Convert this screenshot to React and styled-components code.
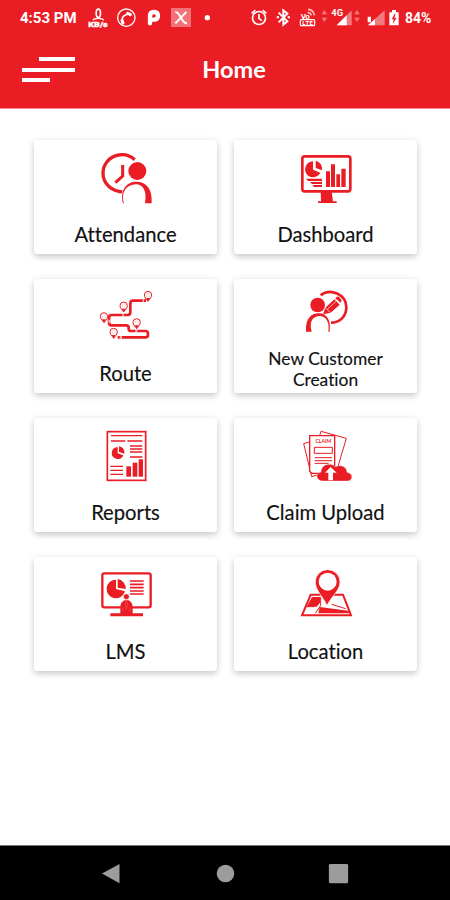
import styled, { createGlobalStyle } from 'styled-components';

const RED = '#ea1c24';

const menus = [
  { label: 'Attendance', icon: AttendanceIcon },
  { label: 'Dashboard', icon: DashboardIcon },
  { label: 'Route', icon: RouteIcon },
  { label: 'New Customer Creation', icon: CustomerIcon, small: true },
  { label: 'Reports', icon: ReportsIcon },
  { label: 'Claim Upload', icon: ClaimIcon },
  { label: 'LMS', icon: LmsIcon },
  { label: 'Location', icon: LocationIcon },
];

function App() {
  return (
    <>
      <GlobalStyle />
      <Screen>
        <Header>
          <StatusBar />
          <TitleBar>
            <MenuButton aria-label="menu">
              <MenuLine $width={36} $right />
              <MenuLine $width={53} />
              <MenuLine $width={28} />
            </MenuButton>
            <Title>Home</Title>
          </TitleBar>
        </Header>
        <MenuGrid>
          {menus.map(({ label, icon: Icon, small }) => (
            <MenuCard key={label}>
              <CardIcon viewBox="0 0 240 195">
                <Icon />
              </CardIcon>
              <CardLabel $small={small}>{label}</CardLabel>
            </MenuCard>
          ))}
        </MenuGrid>
        <NavBar>
          <NavIcon viewBox="0 0 24 24">
            <path d="M0 12 20 1v22z" />
          </NavIcon>
          <NavIcon viewBox="0 0 24 24">
            <circle cx="12" cy="12" r="10" />
          </NavIcon>
          <NavIcon viewBox="0 0 24 24">
            <rect x="1" y="1" width="22" height="22" rx="1.5" />
          </NavIcon>
        </NavBar>
      </Screen>
    </>
  );
}

function StatusBar() {
  return (
    <StatusRow>
      <Clock>4:53 PM</Clock>
      <LeftStatus viewBox="255 0 390 108">
        <ellipse cx="295" cy="40" rx="6.5" ry="12.5" fill="none" stroke="#fff" strokeWidth="5" />
        <path d="M279 61Q281 55 295 55T311 61" fill="none" stroke="#fff" strokeWidth="4" />
        <text
          x="265"
          y="80"
          fontSize="23"
          fontWeight="900"
          textLength="58"
          lengthAdjust="spacingAndGlyphs"
          stroke="#fff"
        >
          KB/s
        </text>
        <circle cx="379" cy="53" r="26" fill="none" stroke="#fff" strokeWidth="4" />
        <path d="M367 69Q362 44 388 42" fill="none" stroke="#fff" strokeWidth="5" />
        <path
          d="M383 40 391 44M366 61 369 69"
          fill="none"
          stroke="#fff"
          strokeWidth="9"
          strokeLinecap="round"
        />
        <path
          d="M450 70V48q0-12 12-12 12 0 12 11.500t-12 11.500h-4"
          fill="none"
          stroke="#fff"
          strokeWidth="13"
          strokeLinecap="round"
          strokeLinejoin="round"
        />
        <rect x="513" y="24" width="60" height="57" fill="#fff" opacity=".38" />
        <path d="M526 36q8 0 17 17t18 17M559 36 526 70" fill="none" stroke="#fff" strokeWidth="6" />
        <circle cx="622" cy="53" r="8" />
      </LeftStatus>
      <RightStatus viewBox="70 0 462 108">
        <g fill="none" stroke="#fff" strokeWidth="5">
          <circle cx="103" cy="54" r="19.5" />
          <path d="M81 40 92 30M125 40 114 30M103 42v13l8 7" />
          <path d="m162 38 26 26-12 10V31l12 10-26 26M156 52h7M189 52h7" strokeWidth="6" />
          <path d="M249 37q9 1 11 9M250 28q17 1 19 18" strokeWidth="5" opacity=".7" />
          <rect x="227" y="59" width="43" height="18" rx="3" strokeWidth="3.5" />
        </g>
        <text x="228" y="56" fontSize="24" fontWeight="700" textLength="27">
          Vo
        </text>
        <text x="233" y="76" fontSize="18" fontWeight="700" textLength="32">
          LTE
        </text>
        <g opacity=".42">
          <path d="m291 43 8-13 8 13zM291 53h16l-8 13zM389 43l8-13 8 13zM389 53h16l-8 13z" />
          <path d="M336 76 381 31v45z" />
          <path d="M430 76 480 31v45z" />
        </g>
        <path d="M336 76 366 46v30zM430 76l21-19v19zM429 50h10v17h-10z" />
        <text x="320" y="47" fontSize="28" fontWeight="700" textLength="35">
          4G
        </text>
        <path d="M494 37h8v-7h12v7h8v39h-28z" />
        <path d="m510 41-9 17h6l-3 14 12-19h-7l4-12z" fill={RED} />
      </RightStatus>
      <Battery>84%</Battery>
    </StatusRow>
  );
}

function AttendanceIcon() {
  return (
    <>
      <g fill="none" stroke={RED}>
        <path d="M146 44C130 29 113 27 98 30 69 35 51 59 51 85c0 29 24 56 64 56" strokeWidth="10" />
        <path d="M110 60v33L88 113" strokeWidth="9" />
      </g>
      <circle cx="154" cy="78" r="31" fill="#fff" />
      <circle cx="154" cy="78" r="27" fill={RED} />
      <path
        d="M112 175C102 134 122 110 151 110c29 0 49 21 46 65z"
        fill="#fff"
        stroke="#fff"
        strokeWidth="6"
      />
      <path
        d="M111 175C101 134 122 110 151 110c29 0 49 21 46 65h-20c7-40-8-58-28-57-26 1-45 22-35 57z"
        fill={RED}
      />
    </>
  );
}

function DashboardIcon() {
  return (
    <g fill={RED}>
      <rect x="49" y="34" width="144" height="105" rx="7" fill="none" stroke={RED} strokeWidth="8" />
      <path d="M104 140h33l4 29h11v5H96v-5h9z" />
      <path d="M81 49v25l22 9A24 24 0 1 1 81 49z" />
      <path d="M89 47a25 25 0 0 1 19 29l-19-7z" />
      <path d="M60 101h48v7H66zM72 111h36v6H78zM79 120h29v6H84z" />
      <path d="M120 79h12v47h-12zM135 58h12v68h-12zM151 88h11v38h-11zM166 71h13v55h-13z" />
    </g>
  );
}

// a map marker, its point at x, y
function Marker({ x, y }) {
  return (
    <g transform={`translate(${x} ${y})`}>
      <path d="M0 0C-4-6-11-12-11-19a11 11 0 0 1 22 0C11-12 4-6 0 0z" fill="#fff" stroke={RED} strokeWidth="3" />
      <circle cy="-19" r="5" fill="none" stroke={RED} strokeWidth="1" opacity=".5" />
      <path d="M-6-10H6L0 0z" fill={RED} />
    </g>
  );
}

function RouteIcon() {
  return (
    <>
      <path
        d="M180 50H141q-8 0-8 8v27q0 8-8 8H77q-8 0-8 8v15q0 8 8 8h44q7 0 7 7v3q0 7 7 7h43q8 0 8 8v3q0 8-8 8H95"
        fill="none"
        stroke={RED}
        strokeWidth="8"
      />
      <path d="M170 50h4M109 93h5M67 112h5M148 141h6M101 160h7" stroke="#fff" strokeWidth="9" opacity=".65" />
      <Marker x={186} y={52} />
      <Marker x={113} y={84} />
      <Marker x={54} y={116} />
      <Marker x={152} y={134} />
      <Marker x={83} y={163} />
    </>
  );
}

function CustomerIcon() {
  return (
    <>
      <path d="M104 34C132 11 181 31 181 70c0 29-21 46-46 46" fill="none" stroke={RED} strokeWidth="8" />
      <circle cx="95" cy="63" r="22" fill={RED} />
      <path d="M60 143C58 102 76 89 98 88c22-1 38 18 33 55h-4c5-30-9-47-26-47-22 0-32 19-24 47z" fill={RED} />
      <path d="m111 91 7-20 27-25 16 16-27 24zM148 43l5-5q4-2 8 3l5 6q2 5-2 9z" fill={RED} />
      <path d="m118 71 15 15M124 76l26-24" stroke="#fff" strokeWidth="2" />
    </>
  );
}

function ReportsIcon() {
  return (
    <g fill={RED}>
      <rect x="64" y="26" width="115" height="146" fill="none" stroke={RED} strokeWidth="5" />
      <path
        d="M75 38h94M75 54h43M124 54h45M132 69h37M132 78h37M132 87h37M132 102h37M73 130h38M73 142h38M73 154h38"
        fill="none"
        stroke={RED}
        strokeWidth="4"
      />
      <path d="M95 72v19l17 6A18 18 0 1 1 95 72zM99 70a18 18 0 0 1 16 22l-16-5z" />
      <rect x="121" y="130" width="14" height="31" />
      <rect x="140" y="119" width="14" height="42" />
      <rect x="158" y="109" width="13" height="52" />
    </g>
  );
}

function ClaimIcon() {
  return (
    <>
      <g fill="#fff" stroke={RED} strokeWidth="3">
        <path d="m53 62 20-6 35 96-31 9zM105 25l76 21-27 91-76-21z" />
        <path d="M71 38h75v113H77l-6-6z" strokeWidth="4" />
        <path d="M85 73h54v18H85z" />
        <path d="M86 104h52M86 113h52M86 121h42" />
      </g>
      <ClaimText x="112" y="61">CLAIM</ClaimText>
      <path
        d="M112 174c-23 0-25-22-7-27-1-20 26-32 43-16 16-8 35 0 35 17 22 4 16 26 3 26z"
        fill={RED}
        stroke="#fff"
        strokeWidth="1"
      />
      <path d="M134 132 117 149h10v23h14v-23h11z" fill="#fff" />
    </>
  );
}

function LmsIcon() {
  return (
    <g fill={RED}>
      <rect x="49" y="34" width="145" height="102" rx="6" fill="none" stroke={RED} strokeWidth="7" />
      <path d="M90 53v28l27 7A28 28 0 1 1 90 53z" />
      <path d="M95 51a28 28 0 0 1 24 30l-24-4z" />
      <path d="M132 57h41M132 67h41M132 77h41M132 87h41M132 96h41" stroke={RED} strokeWidth="5" />
      <circle cx="121" cy="104" r="9" stroke="#fff" strokeWidth="2" />
      <path d="M103 154v-20q1-13 12-19h13q11 6 12 19v20h31v9H73v-9z" />
      <path d="m121 117 4 6-4 18-4-18zM110 136v13M132 136v13" stroke="#fff" strokeWidth="1" opacity=".5" />
    </g>
  );
}

function LocationIcon() {
  return (
    <>
      <path d="M74 98h97l24 62H48z" fill="#fff" stroke={RED} strokeWidth="6" />
      <path d="M78 105h24v17l-10 12H62zM101 135l86 11 3 8h-93z" fill={RED} />
      <path d="M104 105v25l-16 24M60 134h24M137 127l42 13" fill="none" stroke={RED} strokeWidth="3" />
      <path
        d="M123 131C112 104 88 86 88 60a37 37 0 0 1 74 0c0 26-27 44-39 71z"
        fill={RED}
        stroke="#fff"
        strokeWidth="2"
      />
      <circle cx="125" cy="59" r="27" fill="#fff" />
    </>
  );
}

const GlobalStyle = createGlobalStyle`
  body {
    margin: 0;
    background: #fff;
  }
`;

const Screen = styled.div`
  width: 450px;
  height: 900px;
  display: flex;
  flex-direction: column;
  font-family: Lato, sans-serif;
  font-variant-ligatures: none;
  overflow: hidden;
`;

const Header = styled.header`
  box-sizing: border-box;
  height: 109px;
  background: ${RED};
  border-bottom: 1px solid #f4898d;
  color: #fff;
`;

const StatusRow = styled.div`
  height: 36px;
  display: flex;
  align-items: center;
  padding-left: 20px;
  font-family: Roboto, sans-serif;
  font-weight: 700;
`;

const Clock = styled.span`
  width: 65px;
  font-size: 15px;
  white-space: nowrap;
`;

const LeftStatus = styled.svg`
  width: 130px;
  height: 36px;
  flex: none;
  fill: #fff;
`;

const RightStatus = styled.svg`
  width: 154px;
  height: 36px;
  flex: none;
  margin-left: 33px;
  fill: #fff;
`;

const Battery = styled.span`
  margin-left: 3px;
  font-size: 14px;
`;

const TitleBar = styled.div`
  height: 66px;
  display: grid;
  grid-template-columns: 75px 1fr 75px;
  align-items: center;
`;

const MenuButton = styled.button`
  display: flex;
  flex-direction: column;
  gap: 6.5px;
  width: 53px;
  margin: 1px 0 0 22px;
  padding: 0;
  border: none;
  background: none;
`;

const MenuLine = styled.span`
  width: ${({ $width }) => $width}px;
  height: 4px;
  align-self: ${({ $right }) => ($right ? 'flex-end' : 'flex-start')};
  background: #fff;
`;

const Title = styled.h1`
  margin: 0 0 1px 18px;
  width: 282px;
  justify-self: center;
  text-align: center;
  font-size: 23.5px;
  font-weight: 700;
`;

const MenuGrid = styled.main`
  flex: 1;
  display: grid;
  grid-template-columns: 183px 183px;
  grid-auto-rows: 114px;
  gap: 25px 17px;
  padding: 31px 0 0 34px;
`;

const MenuCard = styled.div`
  display: flex;
  flex-direction: column;
  align-items: center;
  padding-top: 5px;
  box-sizing: border-box;
  border-radius: 3px;
  background: #fff;
  box-shadow: 0 3px 6px rgba(0, 0, 0, 0.18), 0 0 8px rgba(0, 0, 0, 0.06);
`;

const CardIcon = styled.svg`
  width: 80px;
  height: 65px;
  flex: none;
`;

const CardLabel = styled.div`
  width: 140px;
  margin-top: ${({ $small }) => ($small ? '-1px' : '11px')};
  color: #111;
  text-align: center;
  font-size: ${({ $small }) => ($small ? '17.4px' : '20.2px')};
  line-height: ${({ $small }) => ($small ? '21px' : '26px')};
  -webkit-text-stroke: 0.15px #111;
`;

const ClaimText = styled.text`
  fill: ${RED};
  font-size: 15px;
  font-weight: 700;
  text-anchor: middle;
`;

const NavBar = styled.nav`
  box-sizing: border-box;
  height: 55px;
  display: flex;
  align-items: center;
  justify-content: center;
  gap: 92px;
  border-top: 1px solid #777;
  background: #000;
`;

const NavIcon = styled.svg`
  width: 21px;
  height: 21px;
  fill: #9c9c9c;
`;

export default App;
